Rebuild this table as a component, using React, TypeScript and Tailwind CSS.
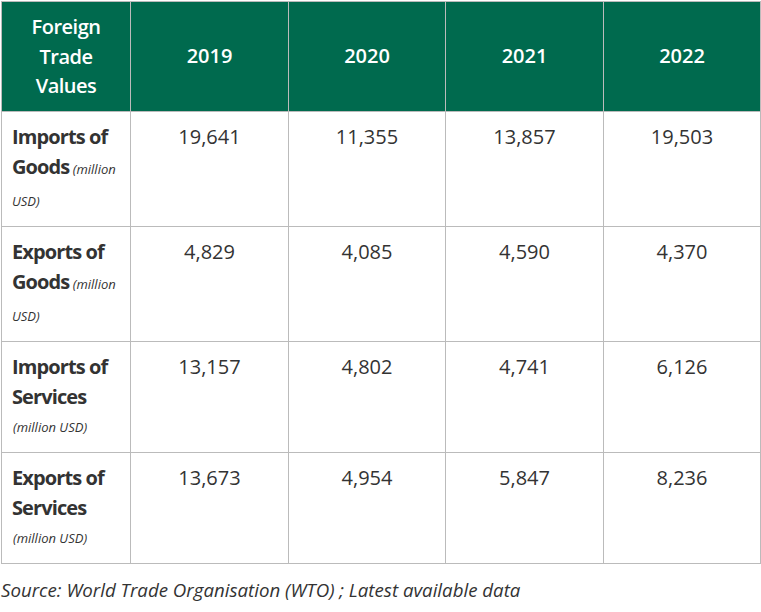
const years = ['2019', '2020', '2021', '2022'];

const rows = [
	{ title: 'Imports of', sub: 'Goods', inline: true, values: ['19,641', '11,355', '13,857', '19,503'] },
	{ title: 'Exports of', sub: 'Goods', inline: true, values: ['4,829', '4,085', '4,590', '4,370'] },
	{ title: 'Imports of', sub: 'Services', inline: false, values: ['13,157', '4,802', '4,741', '6,126'] },
	{ title: 'Exports of', sub: 'Services', inline: false, values: ['13,673', '4,954', '5,847', '8,236'] },
];

export default function App() {
	return (
		<div
			className="w-[761px] bg-white pt-px pl-px text-[#333]"
			style={{ fontFamily: '"Open Sans", "Liberation Sans", sans-serif' }}
		>
			<table className="w-[759px] table-fixed border-collapse">
				<colgroup>
					<col className="w-[129px]" />
					<col className="w-[158px]" />
					<col className="w-[157px]" />
					<col className="w-[158px]" />
					<col className="w-[157px]" />
				</colgroup>
				<thead>
					<tr className="bg-[#006a4e] text-white">
						<th className="border border-[#bbb] px-2 py-[10px] text-center align-middle text-[20px] leading-[29.5px] font-semibold tracking-[-0.5px]">
							Foreign
							<br />
							Trade
							<br />
							Values
						</th>
						{years.map((y) => (
							<th
								key={y}
								className="border border-[#bbb] text-center align-middle text-[20px] leading-[30px] font-semibold"
							>
								{y}
							</th>
						))}
					</tr>
				</thead>
				<tbody>
					{rows.map((row, i) => (
						<tr key={i}>
							<td className="border border-[#bbb] py-[10px] pl-[10px] pr-1 align-top text-[20px] leading-[30px] font-bold tracking-[-0.9px]">
								{row.title}
								<br />
								{row.sub}
								{row.inline ? (
									<span className="text-[13px] font-normal italic tracking-normal">
										{' '}
										(million USD)
									</span>
								) : (
									<span className="block pl-px text-[13px] leading-[30px] font-normal italic tracking-normal">
										(million USD)
									</span>
								)}
							</td>
							{row.values.map((v, j) => (
								<td
									key={j}
									className="border border-[#bbb] pt-[10px] text-center align-top text-[20px] leading-[30px]"
								>
									{v}
								</td>
							))}
						</tr>
					))}
				</tbody>
			</table>
			<p className="mt-[14px] text-[18.7px] leading-[24px] italic">
				Source: World Trade Organisation (WTO) ; Latest available data
			</p>
		</div>
	);
}
